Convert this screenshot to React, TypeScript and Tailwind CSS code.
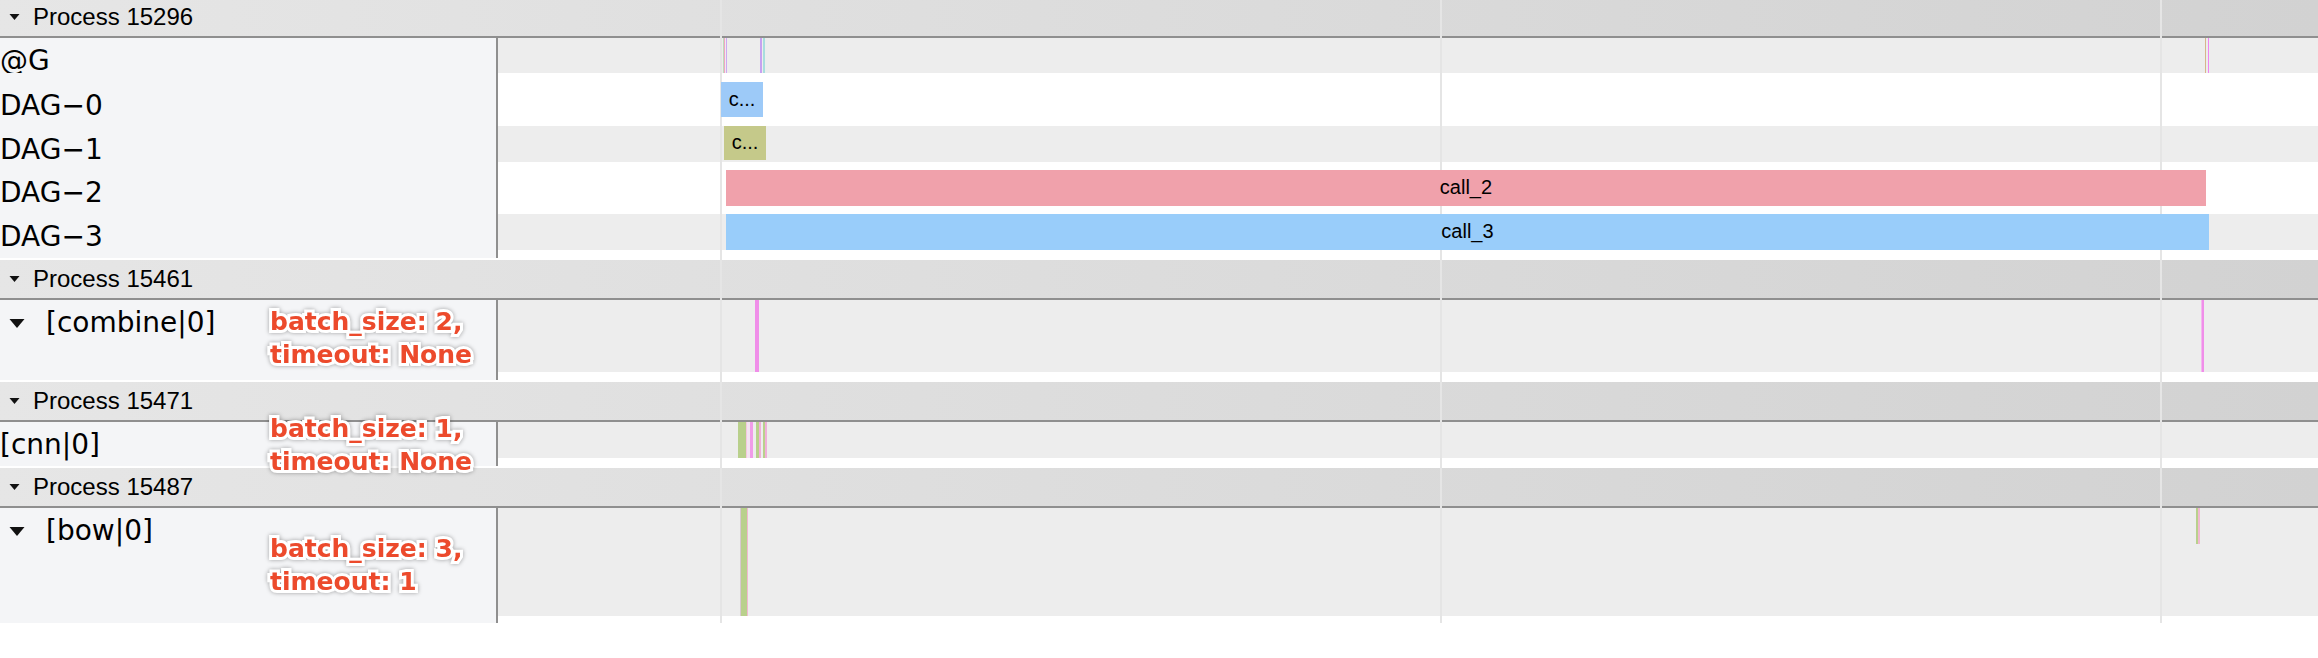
import clsx from "clsx";

type Slice = { x0: number; x1: number; top?: number; h?: number; color: string; text?: string };

type Row = {
  label?: React.ReactNode;
  rowH: string;
  trackH?: string;
  trackBg: string;
  slices?: Slice[];
};

// track canvas starts right after the label column + its 2px border
const TRACK_X = 498;

const dag = "font-['DejaVu_Sans',sans-serif] text-[28px] leading-[28px] text-black";

function Caret({ w, h }: { w: number; h: number }) {
  return (
    <svg width={w} height={h} viewBox="0 0 10 6" className="shrink-0">
      <path d="M0 0H10L5 6Z" fill="#111" />
    </svg>
  );
}

function ProcessHeader({ pid, first }: { pid: string; first?: boolean }) {
  return (
    <div
      className={clsx(
        "flex h-[40px] items-center gap-[13px] border-b-2 border-[#8f8f8f] bg-linear-to-r from-[#e6e6e6] to-[#d2d2d2] pl-[9px]",
        first && "-mt-[2px]"
      )}
    >
      <Caret w={11} h={6} />
      <span className="font-['Liberation_Sans',Arial,sans-serif] text-[24px] text-black">Process {pid}</span>
    </div>
  );
}

function SliceBox({ s }: { s: Slice }) {
  return (
    <div
      className="absolute z-[2] flex items-center justify-center overflow-hidden pb-[2px] font-['Liberation_Sans',Arial,sans-serif] text-[20px] text-black"
      style={{
        left: s.x0 - TRACK_X,
        width: s.x1 - s.x0,
        top: s.top ?? 0,
        height: s.h ?? "100%",
        background: s.color,
      }}
    >
      {s.text}
    </div>
  );
}

function TrackRow({ row }: { row: Row }) {
  return (
    <div className={clsx("flex", row.rowH)}>
      <div className="w-[498px] shrink-0 border-r-2 border-[#8f8f8f] bg-[#f4f5f7]">{row.label}</div>
      <div className="flex-1 bg-white">
        <div className={clsx("relative", row.trackH ?? "h-full", row.trackBg)}>
          {row.slices?.map((s, i) => <SliceBox key={i} s={s} />)}
        </div>
      </div>
    </div>
  );
}

const thin = (x0: number, x1: number, color: string): Slice => ({ x0, x1, color });

const dagRows: Row[] = [
  {
    label: <div className={clsx(dag, "pt-[9px]")}>@G</div>,
    rowH: "h-[35px]",
    trackBg: "bg-[#ededed]",
    slices: [
      thin(722.5, 723.7, "#bcdcbc"),
      thin(723.7, 725, "#f2a4c4"),
      thin(726, 727.3, "#cfa6f2"),
      thin(760, 762.3, "#c7a2f0"),
      thin(763.3, 765, "#a8dede"),
      thin(2204.7, 2206, "#d8b48c"),
      thin(2207.7, 2209, "#f084f0"),
    ],
  },
  {
    label: <div className={clsx(dag, "pt-[19px]")}>DAG−0</div>,
    rowH: "h-[53px]",
    trackBg: "bg-white",
    slices: [{ x0: 721, x1: 763, top: 9, h: 35, color: "#9dcaf8", text: "c..." }],
  },
  {
    label: <div className={clsx(dag, "pt-[10px]")}>DAG−1</div>,
    rowH: "h-[36px]",
    trackBg: "bg-[#ededed]",
    slices: [{ x0: 724, x1: 766, top: 0, h: 34, color: "#c5c98a", text: "c..." }],
  },
  {
    label: <div className={clsx(dag, "pt-[17px]")}>DAG−2</div>,
    rowH: "h-[52px]",
    trackBg: "bg-white",
    slices: [{ x0: 726, x1: 2206, top: 8, h: 36, color: "#f0a1ab", text: "call_2" }],
  },
  {
    label: <div className={clsx(dag, "pt-[9px]")}>DAG−3</div>,
    rowH: "h-[36px]",
    trackBg: "bg-[#ededed]",
    slices: [{ x0: 726, x1: 2209, top: 0, h: 36, color: "#99cdfa", text: "call_3" }],
  },
  { rowH: "h-[8px]", trackBg: "bg-white" },
];

function ThreadLabel({ name }: { name: string }) {
  return (
    <div className="flex items-center gap-[21px] pl-[9px] pt-[9px]">
      <Caret w={16} h={9} />
      <span className={dag}>{name}</span>
    </div>
  );
}

const green = "#b9d08c";

const combineRow: Row = {
  label: <ThreadLabel name="[combine|0]" />,
  rowH: "h-[80px]",
  trackH: "h-[72px]",
  trackBg: "bg-[#ededed]",
  slices: [thin(755, 759, "#f08ee9"), thin(2201, 2202, "#f4b6f0"), thin(2202, 2204, "#f08ee9")],
};

const cnnRow: Row = {
  label: <div className={clsx(dag, "pt-[9px]")}>[cnn|0]</div>,
  rowH: "h-[44px]",
  trackH: "h-[36px]",
  trackBg: "bg-[#ededed]",
  slices: [
    thin(737.7, 745.7, green),
    thin(745.7, 747.3, "#f5c8e0"),
    thin(747.3, 750, "#f3e4f2"),
    thin(750, 752.7, "#f09ce8"),
    thin(756, 759, green),
    thin(759, 760.7, "#f0b0d8"),
    thin(763.3, 765.3, green),
    thin(765.3, 767, "#f0b0d8"),
  ],
};

const bowRow: Row = {
  label: <ThreadLabel name="[bow|0]" />,
  rowH: "h-[115px]",
  trackH: "h-[108px]",
  trackBg: "bg-[#ededed]",
  slices: [
    thin(739.5, 740.5, "#d8c8d0"),
    thin(740.5, 746.7, green),
    thin(746.7, 748.3, "#f0b8d0"),
    { x0: 2196, x1: 2198.3, top: 0, h: 36, color: green },
    { x0: 2198.3, x1: 2200, top: 0, h: 36, color: "#f0b8d0" },
  ],
};

function Note({ top, lines }: { top: string; lines: [string, string] }) {
  return (
    <div
      className={clsx(
        "absolute left-[270px] z-[3] font-['DejaVu_Sans',sans-serif] text-[25px] leading-[33px] font-bold text-[#ec4a2c] [-webkit-text-stroke:6px_white] [paint-order:stroke_fill] drop-shadow-[0_0_2px_rgba(0,0,0,0.35)]",
        top
      )}
    >
      <div>{lines[0]}</div>
      <div>{lines[1]}</div>
    </div>
  );
}

export default function App() {
  return (
    <div className="relative h-[658px] w-full overflow-hidden bg-white">
      <ProcessHeader pid="15296" first />
      {dagRows.map((r, i) => (
        <TrackRow key={i} row={r} />
      ))}
      <div className="h-[2px]" />

      <ProcessHeader pid="15461" />
      <TrackRow row={combineRow} />
      <div className="h-[2px]" />

      <ProcessHeader pid="15471" />
      <TrackRow row={cnnRow} />
      <div className="h-[2px]" />

      <ProcessHeader pid="15487" />
      <TrackRow row={bowRow} />

      {/* time grid */}
      <div className="absolute left-[720px] top-0 z-[1] h-[623px] w-[2px] bg-[#e5e5e5]" />
      <div className="absolute left-[1440px] top-0 z-[1] h-[623px] w-[2px] bg-[#e5e5e5]" />
      <div className="absolute left-[2160px] top-0 z-[1] h-[623px] w-[2px] bg-[#e5e5e5]" />

      <Note top="top-[305px]" lines={["batch_size: 2,", "timeout: None"]} />
      <Note top="top-[412px]" lines={["batch_size: 1,", "timeout: None"]} />
      <Note top="top-[532px]" lines={["batch_size: 3,", "timeout: 1"]} />
    </div>
  );
}
